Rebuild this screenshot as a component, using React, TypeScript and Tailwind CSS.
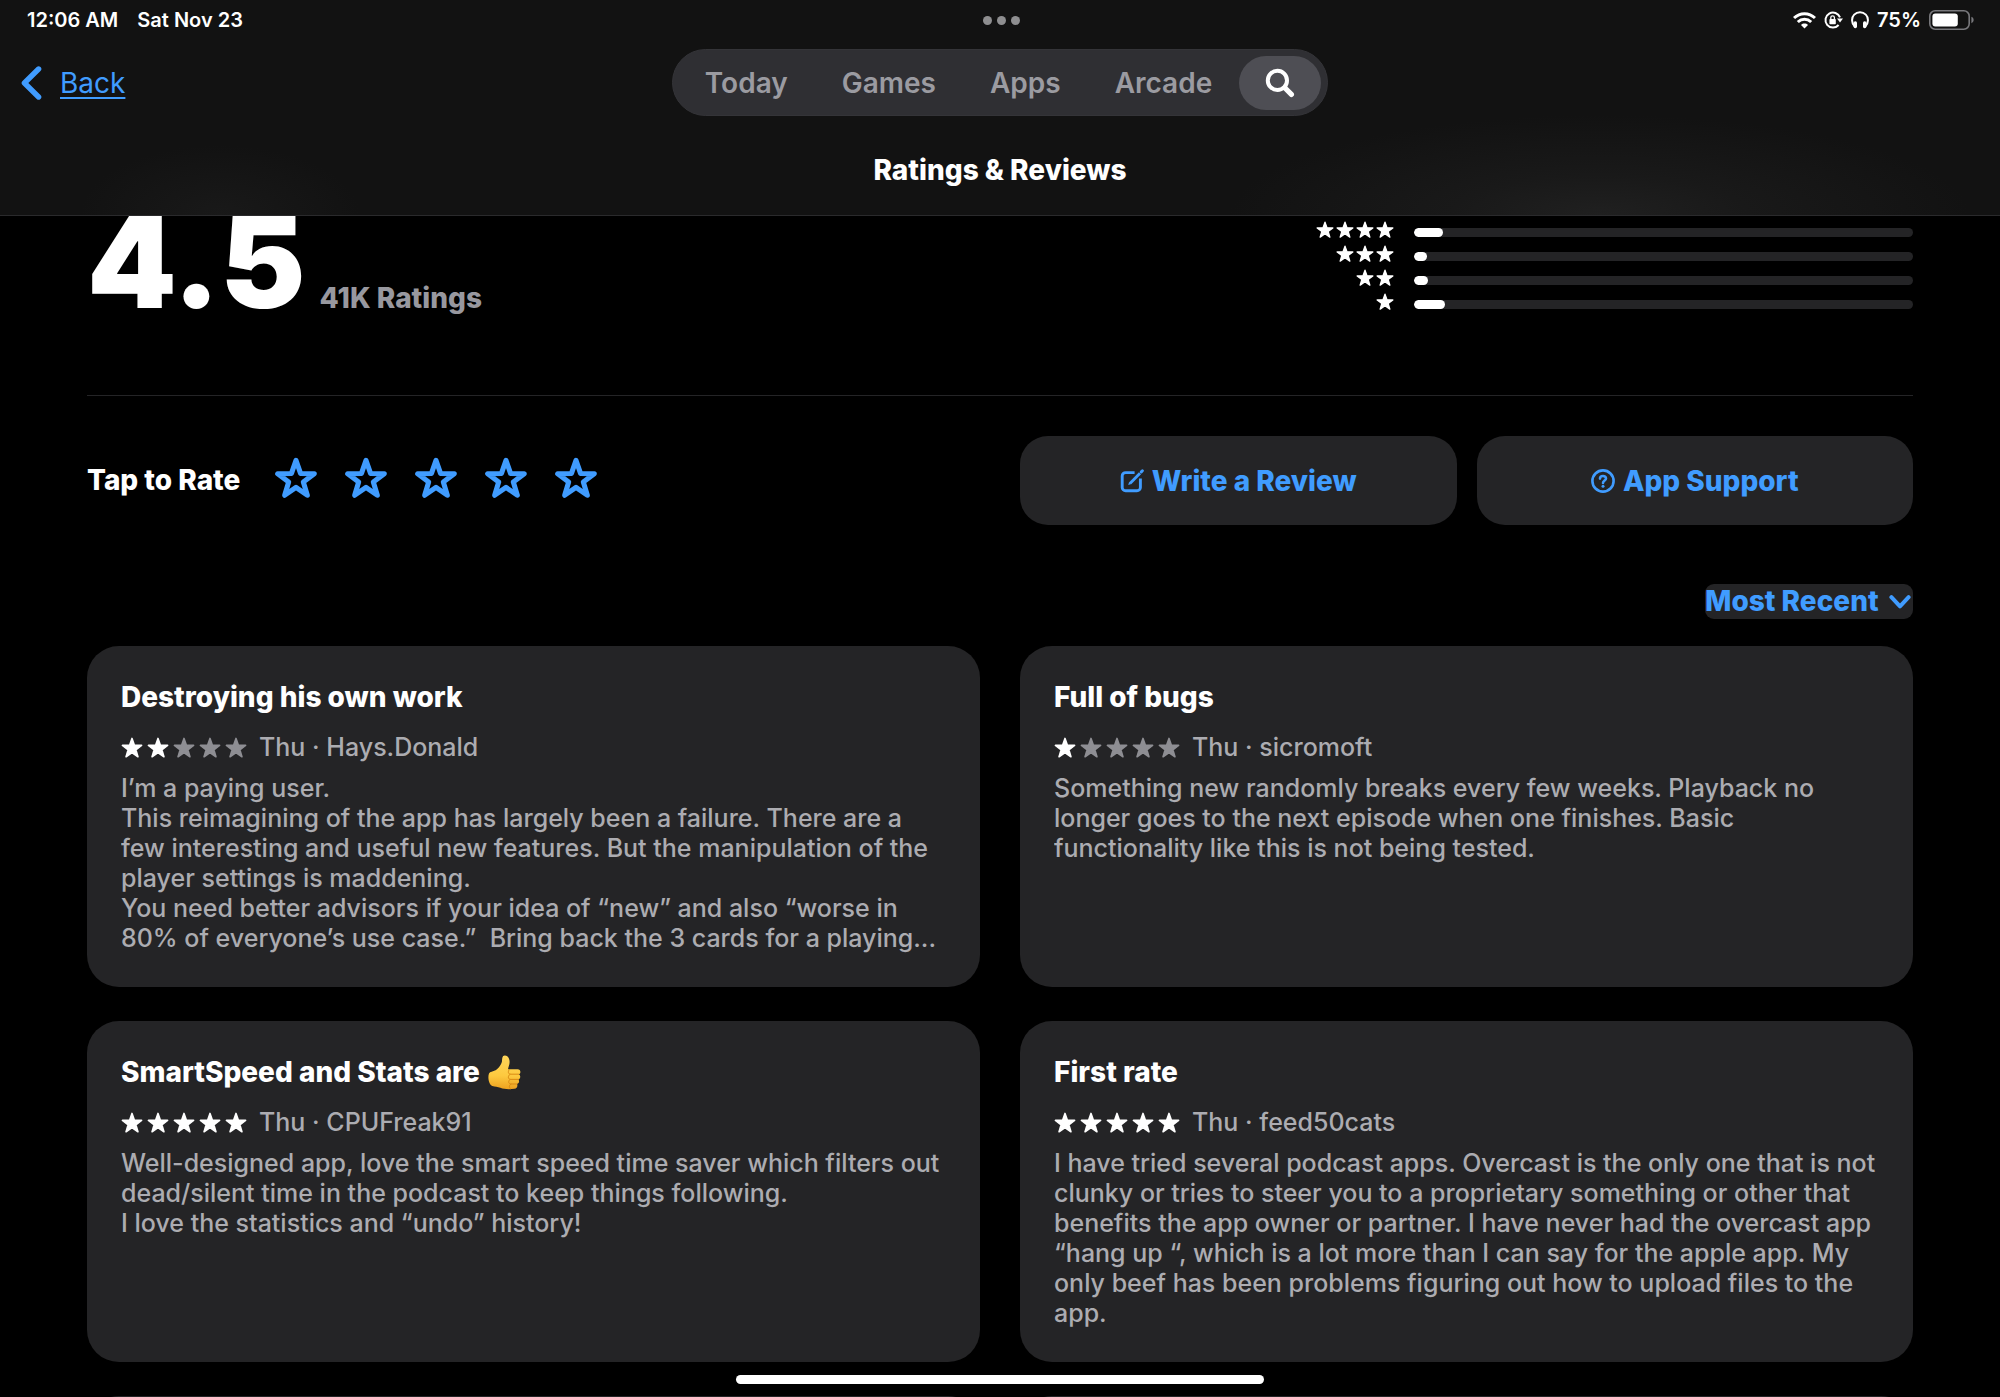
import { useState } from 'react';

interface Review {
  title: string;
  thumbsUp?: boolean;
  rating: number;
  date: string;
  author: string;
  body: string;
}

const tabs = ['Today', 'Games', 'Apps', 'Arcade'];

const histogram = [
  { stars: 4, percent: 5.8 },
  { stars: 3, percent: 2.6 },
  { stars: 2, percent: 2.8 },
  { stars: 1, percent: 6.2 },
];

const reviews: Review[] = [
  {
    title: 'Destroying his own work',
    rating: 2,
    date: 'Thu',
    author: 'Hays.Donald',
    body: 'I’m a paying user.\nThis reimagining of the app has largely been a failure. There are a few interesting and useful new features. But the manipulation of the player settings is maddening.\nYou need better advisors if your idea of “new” and also “worse in 80% of everyone’s use case.”  Bring back the 3 cards for a playing...',
  },
  {
    title: 'Full of bugs',
    rating: 1,
    date: 'Thu',
    author: 'sicromoft',
    body: 'Something new randomly breaks every few weeks. Playback no longer goes to the next episode when one finishes. Basic functionality like this is not being tested.',
  },
  {
    title: 'SmartSpeed and Stats are',
    thumbsUp: true,
    rating: 5,
    date: 'Thu',
    author: 'CPUFreak91',
    body: 'Well-designed app, love the smart speed time saver which filters out dead/silent time in the podcast to keep things following.\nI love the statistics and “undo” history!',
  },
  {
    title: 'First rate',
    rating: 5,
    date: 'Thu',
    author: 'feed50cats',
    body: 'I have tried several podcast apps. Overcast is the only one that is not clunky or tries to steer you to a proprietary something or other that benefits the app owner or partner. I have never had the overcast app “hang up “, which is a lot more than I can say for the apple app. My only beef has been problems figuring out how to upload files to the app.',
  },
];

const STAR_PATH =
  'M12 1.6L14.59 9.04L22.46 9.2L16.18 13.96L18.47 21.5L12 17L5.53 21.5L7.82 13.96L1.54 9.2L9.41 9.04Z';

const Star = ({ className }: { className: string }) => (
  <svg viewBox="0 0 24 24" className={className} fill="currentColor" stroke="currentColor" strokeWidth="1.8" strokeLinejoin="round" aria-hidden="true">
    <path d={STAR_PATH} />
  </svg>
);

const StarOutline = () => (
  <svg viewBox="0 0.8 24 24" className="size-[42px] overflow-visible" fill="none" stroke="currentColor" strokeWidth="2.9" strokeLinejoin="round" aria-hidden="true">
    <path d={STAR_PATH} />
  </svg>
);

const ThumbsUp = () => (
  <svg viewBox="0 0 33 35" className="h-[35px] w-[33px]" role="img" aria-label="thumbs up">
    <defs>
      <linearGradient id="thumb-skin" x1="0" y1="0" x2="0" y2="1">
        <stop offset="0" stopColor="#ffd65a" />
        <stop offset="0.6" stopColor="#fdc93f" />
        <stop offset="1" stopColor="#eda11f" />
      </linearGradient>
    </defs>
    <path
      d="M1 18.5C2 16.4 5 16.6 7.6 15.2C10.6 13.4 13.4 9.6 14 6.2C14.3 3.6 14 .8 16.8 .6C20 .5 21.6 3.6 21.6 7C21.6 9.8 20.4 12 20 14.2H29.6C33 14.2 33.2 18.6 30.8 19.2C33 20.2 32.6 24 30.2 24.4C31.8 25.6 31.2 28.6 29 29C30 30.6 29 33.6 26.4 33.8C22 34.4 16 34.4 12.4 32.8C9.6 31.6 7 32 4.4 31C.6 29.4 -.4 21.8 1 18.5Z"
      fill="url(#thumb-skin)"
    />
    <path
      d="M30.8 19.2H22.6C20 19.2 19.6 16 21.4 14.6M30.2 24.4H22.4C19.8 24.2 19.6 20.6 22 19.4M29 29H22.6C20.2 28.8 20 25.4 22.2 24.5M22.8 29.2C21 29.8 20.8 32.6 22.4 33.8"
      fill="none"
      stroke="#d98a14"
      strokeWidth="1"
      strokeLinecap="round"
    />
  </svg>
);

const StatusIcons = () => (
  <div className="flex items-center">
    <svg viewBox="0 0 23 17" className="h-[17px] w-[23px]" fill="none" stroke="currentColor" strokeWidth="3" aria-hidden="true">
      <path d="M1 6C7 .2 16 .2 22 6" />
      <path d="M4.8 10C8.8 6.2 14.2 6.2 18.2 10" />
      <path d="M11.5 16.6L8 13C10 11.1 13 11.1 15 13Z" fill="currentColor" stroke="none" />
    </svg>
    <svg viewBox="0 0 18 18" className="ml-2 size-[18px] overflow-visible" fill="none" stroke="currentColor" strokeWidth="2" aria-hidden="true">
      <path d="M14.6 14A7.5 7.5 0 1 1 16 6.4" />
      <path d="M13 7.4H19L16 11.6Z" fill="currentColor" stroke="none" />
      <rect x="5.4" y="8" width="6.4" height="5.2" rx="0.8" fill="currentColor" stroke="none" />
      <path d="M6.8 8.4V6.6A1.8 1.8 0 0 1 10.4 6.6V8.4" strokeWidth="1.3" />
    </svg>
    <svg viewBox="0 0 18 18" className="ml-[9px] size-[18px]" fill="none" stroke="currentColor" strokeWidth="2" aria-hidden="true">
      <path d="M3.6 15.4C.4 12 .2 6.6 3.2 3.6C6.4 .4 11.6 .4 14.8 3.6C17.8 6.6 17.6 12 14.4 15.4" />
      <rect x="2.6" y="10.2" width="3.4" height="7" rx="1.6" fill="currentColor" stroke="none" />
      <rect x="12" y="10.2" width="3.4" height="7" rx="1.6" fill="currentColor" stroke="none" />
    </svg>
    <span className="ml-2">75%</span>
    <svg viewBox="0 0 46 20" className="ml-2 h-5 w-[46px]" fill="none" aria-hidden="true">
      <rect x="0.8" y="0.8" width="39.4" height="18.4" rx="5.4" stroke="#78787c" strokeWidth="1.6" />
      <rect x="3.4" y="3.4" width="25.4" height="13.2" rx="3" fill="#fff" />
      <path d="M42.4 6.8C45.4 8 45.4 12 42.4 13.2Z" fill="#78787c" />
    </svg>
  </div>
);

const Header = () => (
  <header className="relative z-10 shrink-0 border-b border-[#2a2a2c] bg-[#121212] bg-[radial-gradient(370px_100px_at_80%_100%,#202020,#191919_40%,transparent),radial-gradient(140px_70px_at_11%_100%,#191919,transparent)]">
    <div className="grid h-10 grid-cols-[1fr_auto_1fr] items-center pr-[25px] pl-[27px] text-xl font-semibold">
      <div className="flex gap-[19px]">
        <span>12:06 AM</span>
        <span>Sat Nov 23</span>
      </div>
      <div className="flex gap-[5px]">
        <span className="size-[9px] rounded-full bg-[#8e8e90]" />
        <span className="size-[9px] rounded-full bg-[#8e8e90]" />
        <span className="size-[9px] rounded-full bg-[#8e8e90]" />
      </div>
      <div className="flex justify-end">
        <StatusIcons />
      </div>
    </div>

    <div className="mt-[9px] grid grid-cols-[1fr_auto_1fr] items-center px-5">
      <a href="#back" className="flex items-center gap-[18px] justify-self-start text-[28px] leading-10 text-[#409cff]">
        <svg viewBox="0 0 22 34" className="h-[34px] w-[22px]" fill="none" stroke="currentColor" strokeWidth="5.4" strokeLinecap="round" strokeLinejoin="round" aria-hidden="true">
          <path d="M18.6 3L4.4 17L18.6 31" />
        </svg>
        <span className="underline decoration-2 underline-offset-[4px]">Back</span>
      </a>
      <nav className="flex h-[67px] items-center rounded-full border border-[#343438] bg-[#2f2f33] pr-1.5 pl-8 text-[28px] leading-10 font-semibold text-[#9b9ba1]">
        <div className="flex gap-[54px]">
          {tabs.map((tab) => (
            <button key={tab}>{tab}</button>
          ))}
        </div>
        <button aria-label="Search" className="ml-[27px] flex h-[54px] w-[82px] items-center justify-center rounded-full bg-[#4e4e54] text-white">
          <svg viewBox="0 0 30 30" className="size-[30px]" fill="none" stroke="currentColor" strokeLinecap="round" aria-hidden="true">
            <circle cx="12.4" cy="12.4" r="9.6" strokeWidth="4" />
            <path d="M20 20L26.4 26.4" strokeWidth="5.2" />
          </svg>
        </button>
      </nav>
      <div />
    </div>

    <h1 className="flex h-[99px] items-center justify-center pt-[9px] text-[28px] font-extrabold">Ratings &amp; Reviews</h1>
  </header>
);

const RatingSummary = () => (
  <section className="grid h-[180px] grid-cols-2 gap-10 border-b border-[#242426]">
    <div className="flex items-baseline gap-[14px]">
      <span className="text-[128px] leading-[92px] font-black">4.5</span>
      <span className="text-[28px] font-extrabold text-[#98989f]">41K Ratings</span>
    </div>
    <div className="pt-1">
      {histogram.map((row) => (
        <div key={row.stars} className="flex h-6 items-center justify-end gap-5">
          <div className="flex gap-0.5 pb-1">
            {Array.from({ length: row.stars }, (_, i) => (
              <Star key={i} className="size-[18px]" />
            ))}
          </div>
          <div className="h-[9px] w-[499px] overflow-hidden rounded-full bg-[#242426]">
            <div className="h-full rounded-full bg-white" style={{ width: `${row.percent}%` }} />
          </div>
        </div>
      ))}
    </div>
  </section>
);

const ReviewCard = ({ review }: { review: Review }) => (
  <article className="h-[341px] rounded-[32px] bg-[#242426] pt-[33px] pr-[30px] pl-[34px]">
    <h2 className="flex h-9 items-center gap-2 text-[28px] leading-9 font-extrabold">
      {review.title}
      {review.thumbsUp && <ThumbsUp />}
    </h2>
    <div className="mt-[17px] flex h-[30px] items-center text-[25px] leading-[30px] font-medium text-[#acacb1]">
      <div className="flex gap-1 pt-0.5" role="img" aria-label={`${review.rating} out of 5`}>
        {Array.from({ length: 5 }, (_, i) => (
          <Star key={i} className={i < review.rating ? 'size-[22px] text-white' : 'size-[22px] text-[#8e8e93]'} />
        ))}
      </div>
      <span className="ml-3">
        {review.date} · {review.author}
      </span>
    </div>
    <p className="mt-[11px] line-clamp-6 text-[25px] leading-[30px] font-medium whitespace-pre-wrap text-[#acacb1]">{review.body}</p>
  </article>
);

const App = () => {
  const [sort, setSort] = useState('recent');

  return (
    <div className="relative flex h-screen flex-col overflow-hidden bg-black font-['Inter',sans-serif] text-white">
      <Header />

      <main className="px-[87px]">
        <RatingSummary />

        <section className="mt-10 grid grid-cols-2 items-center gap-10">
          <div className="flex items-center gap-[35px] pb-0.5">
            <span className="text-[28px] leading-10 font-extrabold">Tap to Rate</span>
            <div className="flex gap-7 text-[#409cff]">
              {[1, 2, 3, 4, 5].map((n) => (
                <button key={n} aria-label={`Rate ${n} out of 5`}>
                  <StarOutline />
                </button>
              ))}
            </div>
          </div>
          <div className="grid grid-cols-2 gap-5 text-[28px] leading-10 font-extrabold text-[#409cff]">
            <button className="flex h-[89px] items-center justify-center gap-2 rounded-[28px] bg-[#242426]">
              <svg viewBox="0 0 24 24" className="size-6" fill="none" stroke="currentColor" strokeWidth="2.9" aria-hidden="true">
                <path d="M14.6 3.6H5.6A3.4 3.4 0 0 0 2.2 7V18.4A3.4 3.4 0 0 0 5.6 21.8H17A3.4 3.4 0 0 0 20.4 18.4V9.4" />
                <path d="M10.2 14.2L20 4.2" strokeWidth="2.9" />
                <path d="M21.3 2.9L22.4 1.8" strokeWidth="2.9" strokeLinecap="round" />
                <path d="M8.2 16L9.2 12.8L11.4 15Z" fill="currentColor" stroke="none" />
              </svg>
              Write a Review
            </button>
            <button className="flex h-[89px] items-center justify-center gap-2 rounded-[28px] bg-[#242426]">
              <svg viewBox="0 0 24 24" className="size-6" fill="none" stroke="currentColor" strokeWidth="2.6" aria-hidden="true">
                <circle cx="12" cy="12" r="10.6" />
                <path d="M9 9.6C9 6.2 15 6.2 15 9.4C15 11.4 12 11.6 12 14" strokeLinecap="round" />
                <circle cx="12" cy="17.2" r="1.5" fill="currentColor" stroke="none" />
              </svg>
              App Support
            </button>
          </div>
        </section>

        <div className="relative mt-[59px] ml-auto h-[35px] w-[208px]">
          <select
            aria-label="Sort reviews"
            value={sort}
            onChange={(e) => setSort(e.target.value)}
            className="h-full w-full appearance-none rounded-[9px] bg-[#242426] text-[28px] leading-[35px] font-extrabold text-[#409cff]"
          >
            <option value="recent">Most Recent</option>
            <option value="helpful">Most Helpful</option>
          </select>
          <svg viewBox="0 0 22 14" className="pointer-events-none absolute top-[11px] right-0.5 h-[14px] w-[22px] text-[#409cff]" fill="none" stroke="currentColor" strokeWidth="4" strokeLinecap="round" strokeLinejoin="round" aria-hidden="true">
            <path d="M2.4 2.2L11 11.4L19.6 2.2" />
          </svg>
        </div>

        <section className="mt-[27px] grid grid-cols-2 gap-x-10 gap-y-[34px]">
          {reviews.map((review) => (
            <ReviewCard key={review.title} review={review} />
          ))}
          <div className="h-[341px] rounded-[32px] bg-[#242426]" />
          <div className="h-[341px] rounded-[32px] bg-[#242426]" />
        </section>
      </main>

      {/* home indicator */}
      <div className="absolute bottom-[13px] left-1/2 z-10 h-[9px] w-[528px] -translate-x-1/2 rounded-full bg-white" />
    </div>
  );
};

export default App;
